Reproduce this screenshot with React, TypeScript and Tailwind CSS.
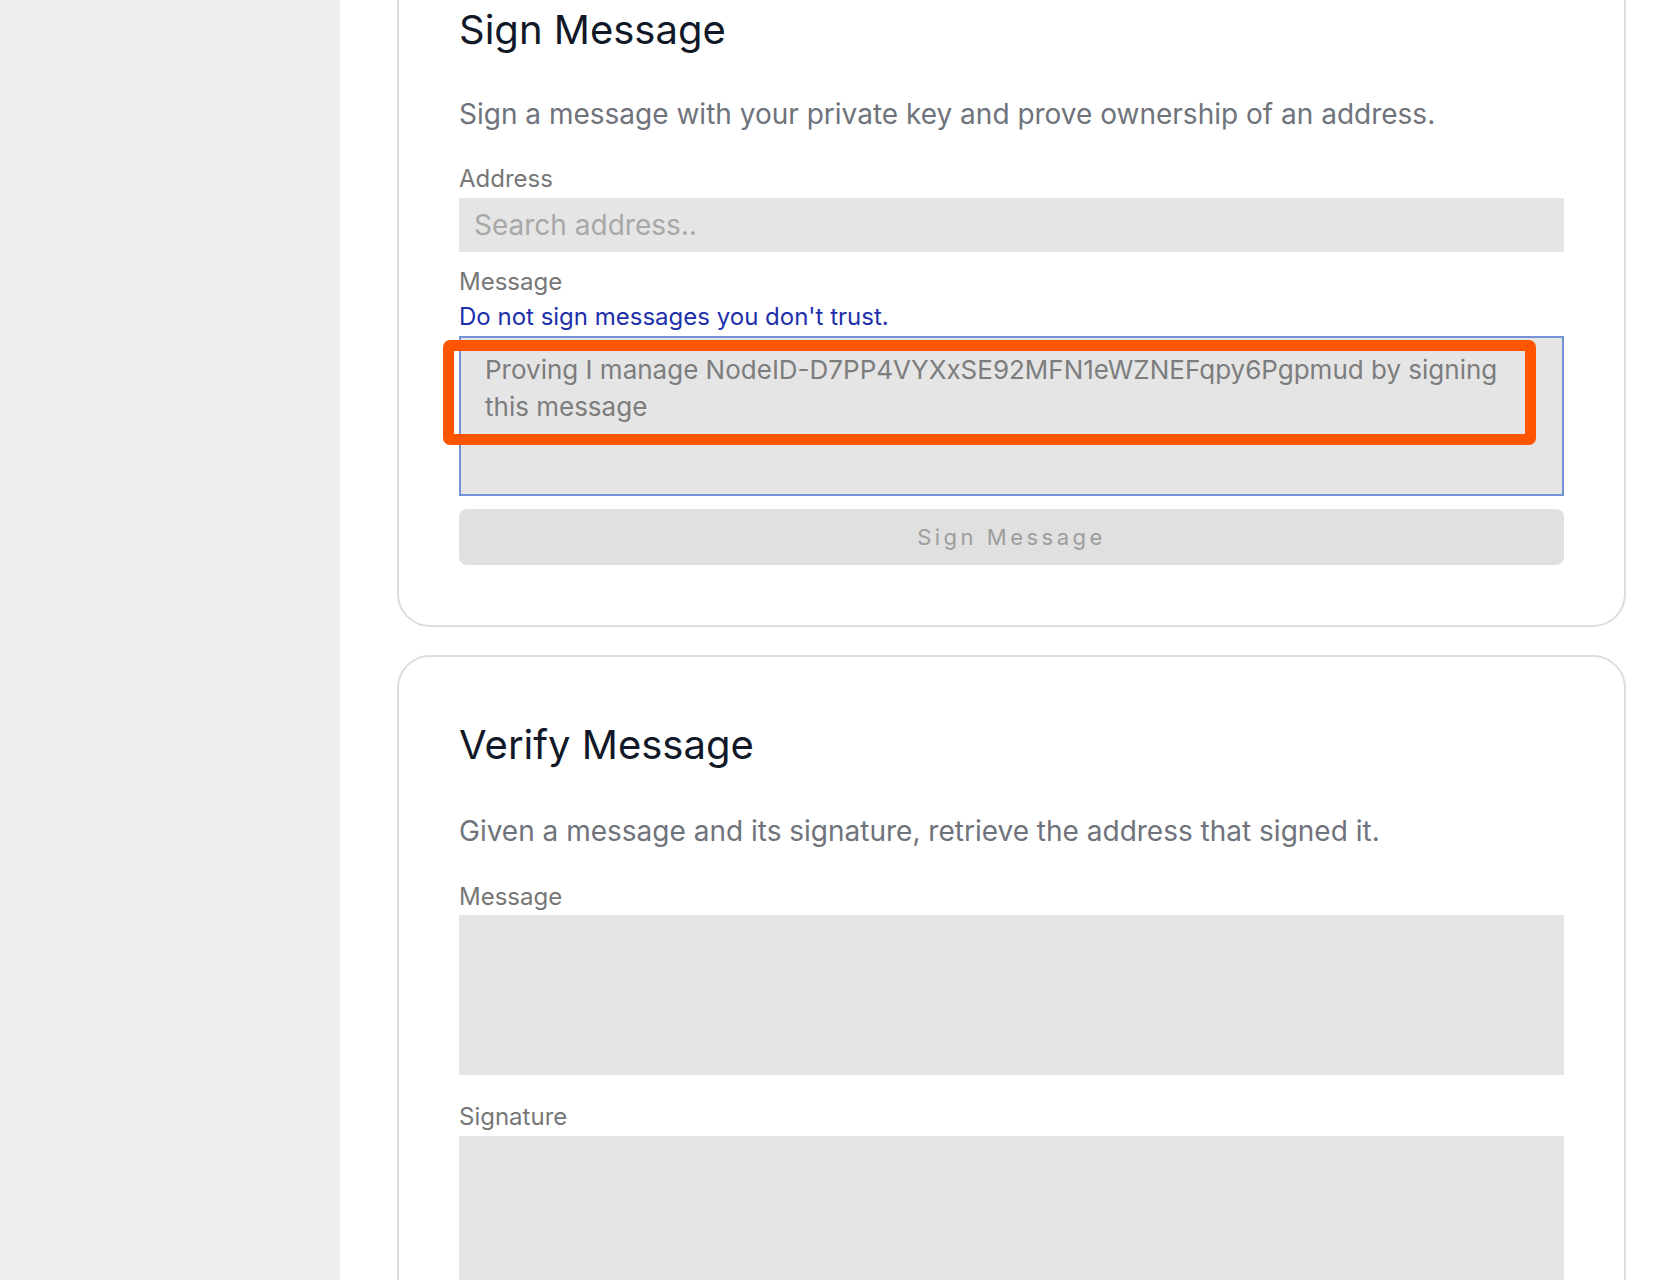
import React from 'react';

const font = { fontFamily: 'Inter, "Noto Sans", sans-serif' };

function Label({ children, className = '' }: { children: React.ReactNode; className?: string }) {
  return <div className={`text-[24px] leading-[30px] text-[#777777] ${className}`}>{children}</div>;
}

function EmptyArea({ className = '' }: { className?: string }) {
  return <div className={`h-[160px] w-full bg-[#e5e5e5] ${className}`} />;
}

export default function App() {
  return (
    <div className="flex h-[1280px] w-full overflow-hidden bg-white" style={font}>
      {/* Sidebar */}
      <aside className="w-[340px] shrink-0 bg-[#eeeeee]" />

      {/* Main */}
      <main className="flex-1 pl-[57px] pr-[32px]">
        <div className="-mt-[60px] flex flex-col">
          {/* Sign Message card */}
          <section className="rounded-[33px] border-2 border-[#dddddd] bg-white px-[60px] pt-[60px] pb-[60px]">
            <h2 className="text-[40px] leading-[56px] font-normal text-[#111827]">Sign Message</h2>
            <p className="mt-[36px] text-[28px] leading-[40px] text-[#6f737b]">
              Sign a message with your private key and prove ownership of an address.
            </p>

            <Label className="mt-[30px]">Address</Label>
            <input
              placeholder="Search address.."
              className="mt-[4px] block h-[54px] w-full bg-[#e5e5e5] px-[15px] text-[28px] text-[#555555] outline-none placeholder:text-[#a8a8a8]"
              style={font}
            />

            <Label className="mt-[15px]">Message</Label>
            <div className="mt-[5px] text-[24px] leading-[30px] text-[#1d2fab]">Do not sign messages you don't trust.</div>

            <div className="relative mt-[4px]">
              <div className="h-[160px] w-full border-2 border-[#7593d4] bg-[#e5e5e5] px-[24px] pt-[13px] text-[26px] leading-[37px] text-[#7d7d7d]">
                Proving I manage NodeID-D7PP4VYXxSE92MFN1eWZNEFqpy6Pgpmud by signing
                <br />
                this message
              </div>
              {/* annotation highlight */}
              <div className="pointer-events-none absolute -left-[16px] top-[4px] right-[28px] h-[105px] rounded-[7px] border-[11px] border-[#ff5500]" />
            </div>

            <button
              className="mt-[13px] flex h-[56px] w-full items-center justify-center rounded-[8px] bg-[#e0e0e0] text-[22px] tracking-[3.5px] text-[#9d9d9d]"
              style={font}
            >
              Sign Message
            </button>
          </section>

          {/* Verify Message card */}
          <section className="mt-[28px] rounded-[33px] border-2 border-[#dddddd] bg-white px-[60px] pt-[60px] pb-[60px]">
            <h2 className="text-[40px] leading-[56px] font-normal text-[#111827]">Verify Message</h2>
            <p className="mt-[38px] text-[28px] leading-[40px] text-[#6f737b]">
              Given a message and its signature, retrieve the address that signed it.
            </p>

            <Label className="mt-[31px]">Message</Label>
            <EmptyArea className="mt-[3px]" />

            <Label className="mt-[27px]">Signature</Label>
            <EmptyArea className="mt-[4px]" />
          </section>
        </div>
      </main>
    </div>
  );
}
